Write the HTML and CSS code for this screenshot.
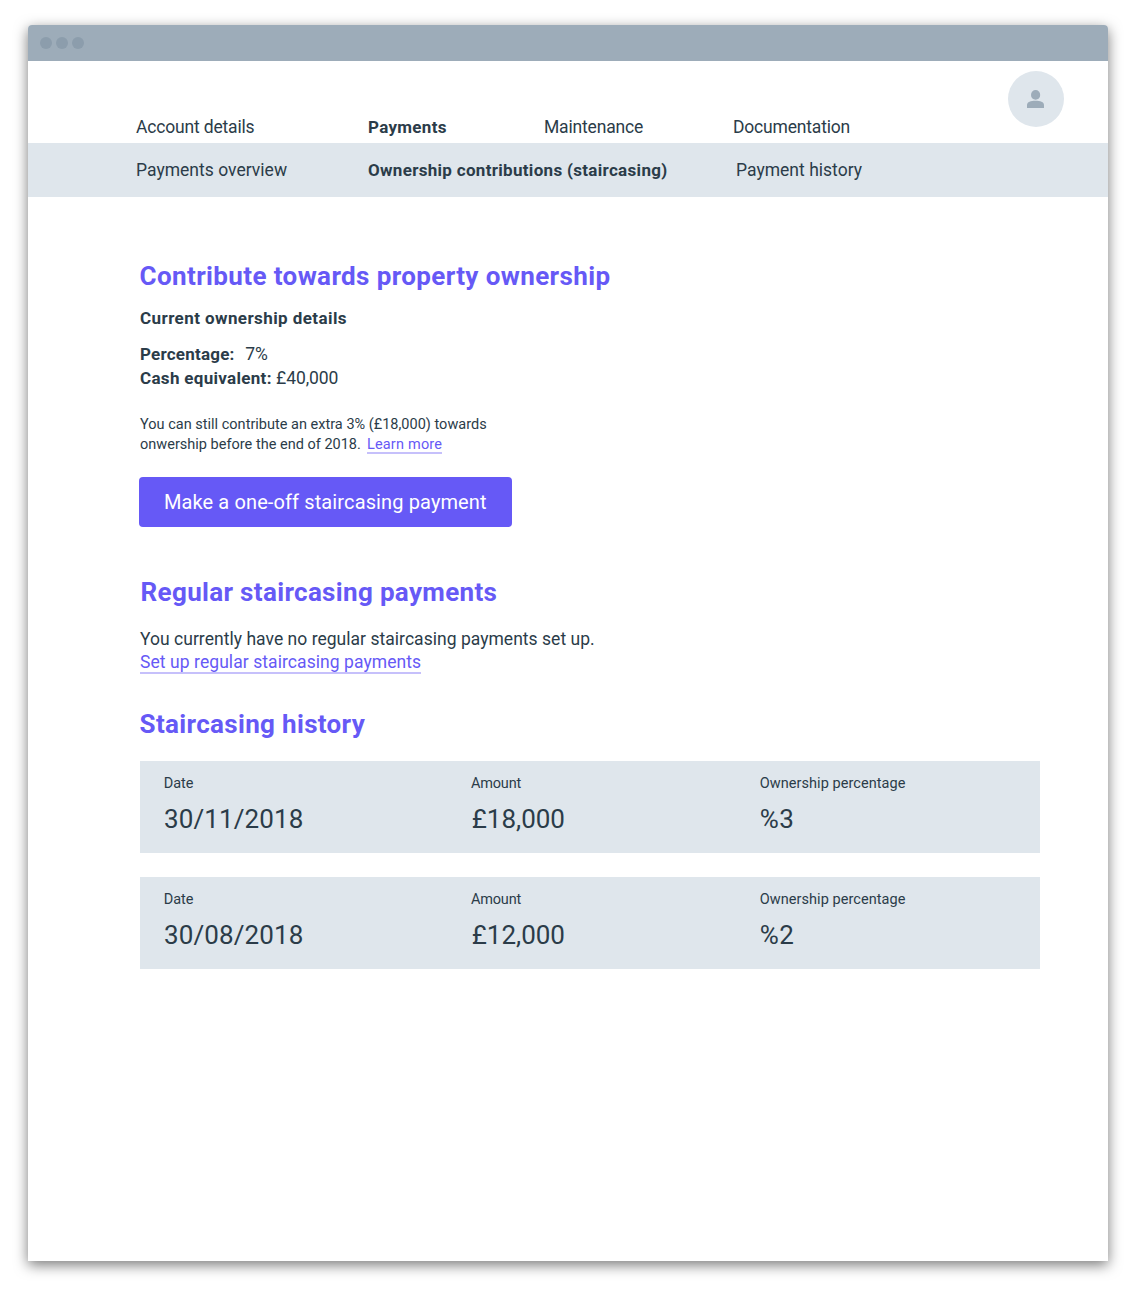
FILE: index.html
```html
<!DOCTYPE html>
<html lang="en">
<head>
<meta charset="utf-8">
<title>Ownership contributions</title>
<link rel="stylesheet" href="styles.css">
</head>
<body>
<div class="window">
  <div class="titlebar"><span class="dot"></span><span class="dot"></span><span class="dot"></span></div>
  <header class="header">
    <nav class="nav">
      <a class="link nav-account">Account details</a>
      <a class="link active">Payments</a>
      <a class="link nav-tight">Maintenance</a>
      <a class="link nav-tight">Documentation</a>
    </nav>
    <div class="avatar">
      <svg width="18" height="20" viewBox="0 0 18 20"><ellipse cx="8.6" cy="5.9" rx="4.6" ry="4.9"/><path d="M0 19v-2.800c0-3.400 3.800-4.500 8.500-4.500s8.500 1.100 8.500 4.500V19z"/></svg>
    </div>
  </header>
  <nav class="subnav">
    <a class="link">Payments overview</a>
    <a class="link active">Ownership contributions (staircasing)</a>
    <a class="link">Payment history</a>
  </nav>
  <main class="content">
    <section>
      <h1 class="title">Contribute towards property ownership</h1>
      <h2 class="subtitle">Current ownership details</h2>
      <dl class="details">
        <div class="row row-percentage"><dt>Percentage:</dt><dd>7%</dd></div>
        <div class="row row-cash"><dt>Cash equivalent:</dt><dd>£40,000</dd></div>
      </dl>
      <p class="hint">You can still contribute an extra 3% (£18,000) towards<br>onwership before the end of 2018.<a class="more">Learn more</a></p>
      <button class="button">Make a one-off staircasing payment</button>
    </section>
    <section class="regular">
      <h1 class="title title-regular">Regular staircasing payments</h1>
      <p class="status">You currently have no regular staircasing payments set up.</p>
      <a class="setup">Set up regular staircasing payments</a>
    </section>
    <section class="history">
      <h1 class="title title-history">Staircasing history</h1>
      <div class="cards">
        <div class="card">
          <div><div class="label">Date</div><div class="value value-date">30/11/2018</div></div>
          <div><div class="label label-amount">Amount</div><div class="value value-amount">£18,000</div></div>
          <div><div class="label label-share">Ownership percentage</div><div class="value value-share">%3</div></div>
        </div>
        <div class="card">
          <div><div class="label">Date</div><div class="value value-date">30/08/2018</div></div>
          <div><div class="label label-amount">Amount</div><div class="value value-amount">£12,000</div></div>
          <div><div class="label label-share">Ownership percentage</div><div class="value value-share">%2</div></div>
        </div>
      </div>
    </section>
  </main>
</div>
</body>
</html>
```
FILE: styles.css
```css
* { box-sizing: border-box; margin: 0; padding: 0; }
body { height: 1292px; padding: 25px 28px 31px; background: #fff; color: #2b3c49; font: 17.5px/24px Roboto, sans-serif; }
.window { width: 1080px; height: 1236px; border-radius: 4px 4px 0 0; background: #fff; box-shadow: 0 4px 14px rgba(0, 0, 0, .53); }
.titlebar { display: flex; align-items: center; gap: 4px; height: 36px; padding-left: 12px; border-radius: 4px 4px 0 0; background: #9dacb9; }
.dot { width: 12px; height: 12px; border-radius: 50%; background: #8c9dac; }

.header { display: flex; height: 82px; padding: 10px 44px 4px 108px; }
.nav { display: grid; grid-template-columns: 232px 176px 189px 1fr; align-self: flex-end; flex: 1; }
.avatar { display: flex; align-items: center; justify-content: center; width: 56px; height: 56px; border-radius: 50%; background: #dfe6ec; }
.avatar svg { fill: #9dacb9; }
.link { white-space: nowrap; letter-spacing: .02px; }
.active { font-weight: 700; font-size: 17px; letter-spacing: .31px; }
.nav-account { letter-spacing: -.17px; }
.nav-tight { letter-spacing: -.18px; }
.subnav { display: grid; grid-template-columns: 232px 368px 1fr; height: 54px; padding: 15px 0 0 108px; background: #dfe6ec; }

.content { padding: 63px 68px 0 112px; }
.title { margin-left: -.4px; font-size: 26px; line-height: 32px; letter-spacing: .38px; color: #6659f6; }
.title-regular { margin-left: .6px; letter-spacing: .33px; }
.title-history { letter-spacing: .33px; }
.subtitle { margin-top: 14px; font-size: 17px; line-height: 24px; letter-spacing: .42px; }
.details { margin: 12px 0 25px; }
.row { display: flex; }
.row dt { font-weight: 700; font-size: 17px; letter-spacing: .31px; }
.row-percentage dt { letter-spacing: .22px; }
.row-percentage { gap: 10.600px; }
.row-cash { gap: 4.300px; }
.row-cash dd { letter-spacing: -.1px; }
.hint { height: 40px; margin-bottom: 22px; font-size: 14.5px; line-height: 20px; letter-spacing: .01px; white-space: nowrap; }
.more, .setup { display: inline-block; border-bottom: 2px solid #c6c0fb; color: #6659f6; }
.more { margin-left: 6px; line-height: 14px; letter-spacing: .2px; }
.button { display: block; width: 373px; height: 50px; margin-left: -1.200px; border: 0; border-radius: 4px; background: #6659f6; color: #fff; font: 20px/50px Roboto, sans-serif; letter-spacing: .12px; }

.regular { margin-top: 49px; }
.status { margin-top: 19px; letter-spacing: .03px; }
.setup { display: block; width: max-content; margin-top: 1px; line-height: 20px; letter-spacing: .07px; }

.history { margin-top: 34px; }
.cards { display: grid; gap: 24px; margin-top: 21px; }
.card { display: grid; grid-template-columns: 307.200px 288.800px 1fr; height: 92px; padding: 13px 0 0 23.700px; background: #dfe6ec; }
.label { font-size: 14.5px; line-height: 20px; }
.label-amount { letter-spacing: -.15px; }
.label-share { letter-spacing: .06px; }
.value { margin-top: 9px; font-size: 26px; line-height: 32px; }
.value-date { padding-left: .3px; letter-spacing: .1px; }
.value-amount { padding-left: .8px; }
.value-share { letter-spacing: .5px; }
```
